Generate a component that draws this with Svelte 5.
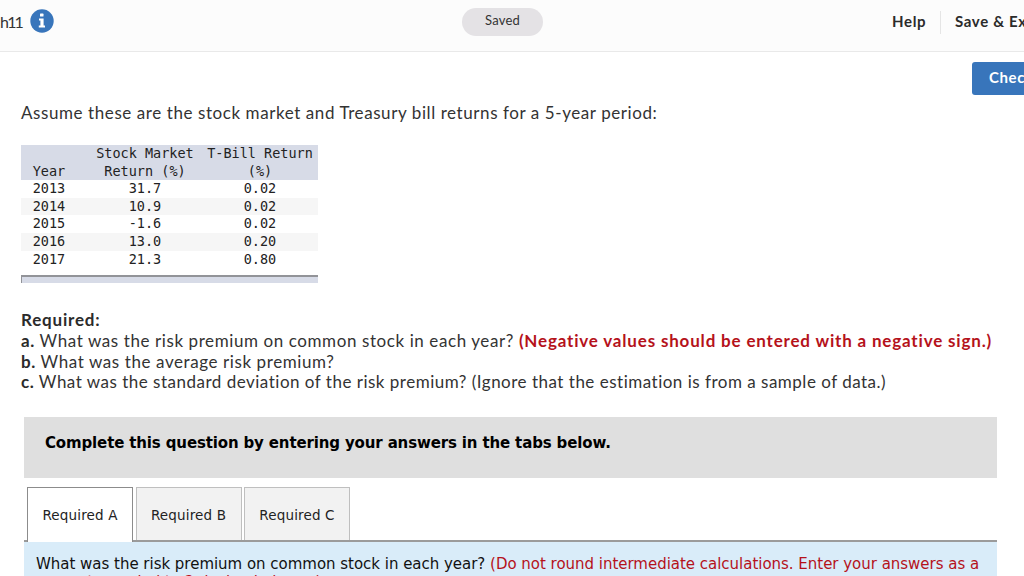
<script lang="ts">
  type Row = { year: string; stock: string; bill: string };

  const rows: Row[] = [
    { year: "2013", stock: "31.7", bill: "0.02" },
    { year: "2014", stock: "10.9", bill: "0.02" },
    { year: "2015", stock: "-1.6", bill: "0.02" },
    { year: "2016", stock: "13.0", bill: "0.20" },
    { year: "2017", stock: "21.3", bill: "0.80" },
  ];

  const tabs = ["Required A", "Required B", "Required C"];
  let active = $state(0);
</script>

<div class="page">
  <header>
    <div class="title">
      <span class="chapter">h11</span>
      <svg class="info" viewBox="0 0 24 24" aria-label="Info">
        <circle cx="12" cy="12" r="11.7" fill="#3875bb" />
        <rect x="10" y="4.6" width="3.5" height="3" rx=".6" fill="#fff" />
        <path d="M9 9.6h4.6v7H15v1.9H8.8v-1.9h1.6v-5H9z" fill="#fff" />
      </svg>
    </div>
    <span class="saved">Saved</span>
    <nav>
      <span class="help">Help</span>
      <span class="save">Save &amp; Exit</span>
    </nav>
  </header>

  <div class="actions">
    <button class="check">Check my work</button>
  </div>

  <main>
    <p class="intro">Assume these are the stock market and Treasury bill returns for a 5-year period:</p>

    <table>
      <thead>
        <tr>
          <th class="year">Year</th>
          <th class="stock">Stock Market<br />Return (%)</th>
          <th class="bill">T-Bill Return<br />(%)</th>
          <th class="edge"></th>
        </tr>
      </thead>
      <tbody>
        {#each rows as row}
          <tr>
            <td class="year">{row.year}</td>
            <td>{row.stock}</td>
            <td>{row.bill}</td>
            <td></td>
          </tr>
        {/each}
      </tbody>
    </table>
    <div class="table-foot"></div>

    <div class="required">
      <p class="heading"><b>Required:</b></p>
      <p class="line-a">
        <b>a.</b> What was the risk premium on common stock in each year?
        <b class="red">(Negative values should be entered with a negative sign.)</b>
      </p>
      <p class="line-b"><b>b.</b> What was the average risk premium?</p>
      <p class="line-c">
        <b>c.</b> What was the standard deviation of the risk premium? (Ignore that the estimation is from a sample of data.)
      </p>
    </div>

    <section class="answers">
      <div class="instruction">Complete this question by entering your answers in the tabs below.</div>
      <div class="tabs">
        {#each tabs as tab, i}
          <button class="tab" class:active={active === i} onclick={() => (active = i)}>{tab}</button>
        {/each}
      </div>
      <div class="panel">
        What was the risk premium on common stock in each year?
        <span class="red">(Do not round intermediate calculations. Enter your answers as a<br />percent rounded to 2 decimal places.)</span>
      </div>
    </section>
  </main>
</div>

<style>
  :global(body) {
    margin: 0;
    overflow: hidden;
  }

  .page {
    width: 1024px;
    height: 576px;
    overflow: hidden;
    background: #fff;
    color: #333;
    font-family: Lato, sans-serif;
  }

  p {
    margin: 0;
  }

  header {
    display: grid;
    grid-template-columns: 462px 81px 1fr;
    height: 51px;
    border-bottom: 1px solid #e9e9e9;
    background: #fcfcfc;
  }

  .title {
    display: flex;
    align-items: flex-start;
  }

  .chapter {
    width: 30px;
    font-size: 16px;
    line-height: 43px;
    letter-spacing: -1.8px;
  }

  .info {
    width: 24px;
    height: 24px;
    margin-top: 9px;
  }

  .saved {
    height: 28px;
    margin-top: 8px;
    border-radius: 14px;
    background: #e4e2e5;
    font-size: 13px;
    line-height: 25px;
    letter-spacing: 0.2px;
    text-align: center;
  }

  nav {
    display: flex;
    align-items: flex-start;
    padding: 11px 0 0 349px;
    font-size: 15px;
    font-weight: 700;
    line-height: 20px;
    letter-spacing: 0.65px;
    white-space: nowrap;
    color: #2b2b2b;
  }

  .help {
    flex-shrink: 0;
    width: 48px;
    height: 23px;
    border-right: 1px solid #e5e5e5;
  }

  .save {
    padding-left: 14px;
  }

  .actions {
    display: flex;
    padding: 10px 0 0 972px;
  }

  .check {
    flex-shrink: 0;
    width: 145px;
    height: 33px;
    padding: 0 17px 3px;
    border: 0;
    border-radius: 3px;
    background: #3875bb;
    color: #fff;
    font: 700 15px Lato, sans-serif;
    letter-spacing: 0.6px;
    text-align: left;
  }

  main {
    padding: 0 21px;
  }

  .intro {
    margin-top: 7px;
    font-size: 17px;
    line-height: 21px;
    letter-spacing: 0.58px;
    white-space: nowrap;
  }

  table {
    width: 297px;
    margin-top: 22px;
    border-collapse: collapse;
    table-layout: fixed;
    font-family: "DejaVu Sans Mono", monospace;
    font-size: 13.5px;
    line-height: 17.6px;
    text-align: center;
    color: #222;
  }

  thead {
    background: #d7dbe7;
  }

  th,
  td {
    padding: 0;
    font-weight: 400;
    vertical-align: bottom;
    white-space: nowrap;
  }

  .year {
    width: 56px;
    padding-right: 8px;
  }

  .stock {
    width: 120px;
  }

  .bill {
    width: 110px;
  }

  .edge {
    width: 3px;
  }

  tbody tr:nth-child(even) {
    background: #f6f6f6;
  }

  .table-foot {
    width: 297px;
    height: 8px;
    margin-top: 7px;
    box-sizing: border-box;
    border-top: 2px solid #929398;
    border-left: 1px solid #929398;
    background: #d7dbe7;
  }

  .required {
    margin-top: 27px;
    font-size: 17px;
    line-height: 20.7px;
    letter-spacing: 0.5px;
    white-space: nowrap;
  }

  .required b {
    color: #2b2b2b;
  }

  .heading {
    letter-spacing: 0.8px;
  }

  .line-a,
  .line-b {
    letter-spacing: 0.59px;
  }

  .line-a .red {
    letter-spacing: 0.82px;
  }

  .red,
  .required b.red {
    color: #b5121b;
  }

  .answers {
    width: 973px;
    margin: 24px 0 0 3px;
    font-family: "DejaVu Sans", sans-serif;
    color: #111;
  }

  .instruction {
    height: 61px;
    padding: 16px 21px;
    box-sizing: border-box;
    background: #dfdfdf;
    font-size: 15px;
    font-weight: 700;
    line-height: 21px;
    letter-spacing: -0.14px;
    white-space: nowrap;
    color: #000;
  }

  .tabs {
    display: flex;
    gap: 2.5px;
    height: 53px;
    margin-top: 9px;
    padding-left: 3px;
  }

  .tab {
    width: 106px;
    height: 53px;
    padding: 2px 0 0;
    border: 1px solid #bfbfbf;
    border-bottom: 0;
    background: #f2f2f2;
    color: #222;
    font: 13.5px "DejaVu Sans", sans-serif;
    letter-spacing: 0.15px;
  }

  /* covers the panel's top border */
  .tab.active {
    position: relative;
    height: 55px;
    padding-top: 0;
    border-color: #8c8c8c;
    background: #fff;
  }

  .panel {
    height: 40px;
    padding: 13px 12px 0;
    border-top: 2px solid #9b9b9b;
    background: #d9ecf9;
    font-size: 15px;
    line-height: 18px;
    letter-spacing: -0.02px;
    white-space: nowrap;
  }
</style>
